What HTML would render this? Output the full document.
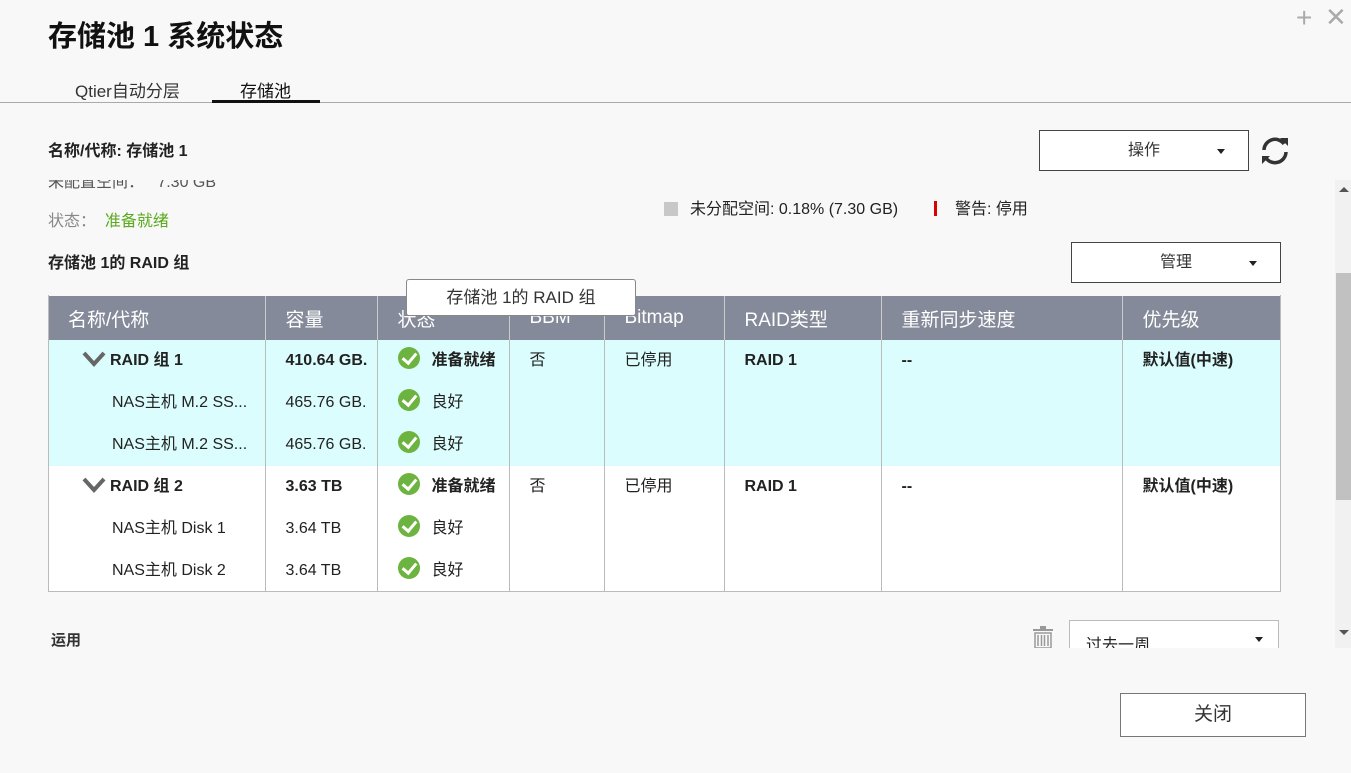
<!DOCTYPE html>
<html><head><meta charset="utf-8"><style>
*{margin:0;padding:0;box-sizing:border-box}
body{width:1351px;height:773px;background:#f8f8f8;font-family:"Liberation Sans","Noto Sans CJK SC",sans-serif;color:#222;position:relative;overflow:hidden}
.a{position:absolute;white-space:nowrap}
.btn{position:absolute;background:#fff;border:1px solid #444;font-size:16px;color:#333}
.tri{position:absolute;width:0;height:0;border-left:4px solid transparent;border-right:4px solid transparent;border-top:5px solid #222}
table{border-collapse:collapse;position:absolute;left:48px;top:296px;width:1233px;font-size:16px}
td,th{border-left:1px solid #bbb;vertical-align:top;text-align:left;font-weight:normal}
th{background:#848a99;color:#fff;font-size:19px;height:44px;padding-left:20px;vertical-align:middle;border-left:1px solid #ccc}
td{padding-left:20px}
.g1 td{background:#dcfdfd}
.g2 td{background:#fff}
.ln{height:42px;line-height:42px}
.ck{display:inline-block;width:22px;height:22px;border-radius:50%;background:#6db33f;vertical-align:middle;margin:-6px 12px 0 0;position:relative}
.ck:after{content:"";position:absolute;left:7px;top:3px;width:6px;height:11px;border:solid #fff;border-width:0 3px 3px 0;transform:rotate(40deg)}
.chev{display:inline-block;width:32px;vertical-align:middle;margin-top:-4px}
b{font-weight:bold}
</style></head><body>
<div class="a" style="left:48px;top:13px;font-size:29px;font-weight:bold;color:#111">存储池 1 系统状态</div>
<div class="a" style="left:1296px;top:2px;font-size:28px;color:#aaa">+</div>
<div class="a" style="left:1325px;top:2px;font-size:26px;color:#aaa">✕</div>
<div class="a" style="left:75px;top:77px;font-size:17px;color:#333">Qtier自动分层</div>
<div class="a" style="left:240px;top:77px;font-size:17px;color:#111">存储池</div>
<div class="a" style="left:0;top:102px;width:1351px;height:1px;background:#aaa"></div>
<div class="a" style="left:212px;top:100px;width:108px;height:3px;background:#111"></div>
<div class="a" style="left:48px;top:137px;font-size:16px;font-weight:bold;color:#222">名称/代称: 存储池 1</div>
<div class="btn" style="left:1039px;top:130px;width:210px;height:41px;line-height:39px;text-align:center">操作</div>
<div class="tri" style="left:1217px;top:149px"></div>
<svg class="a" style="left:1259px;top:134px" width="32" height="34" viewBox="0 0 32 34"><path d="M5 16 A11 11 0 0 1 25 10" fill="none" stroke="#333" stroke-width="3.5"/><path d="M27 18 A11 11 0 0 1 7 24" fill="none" stroke="#333" stroke-width="3.5"/><path d="M21 4 L29 4 L29 12 Z" fill="#333"/><path d="M3 30 L3 22 L11 22 Z" fill="#333"/></svg>
<div class="a" style="left:0;top:180px;width:1335px;height:468px;overflow:hidden">
<div class="a" style="left:48px;top:-12px;font-size:16px;color:#555">未配置空间：&nbsp;&nbsp;&nbsp;7.30 GB</div>
<div class="a" style="left:48px;top:27px;font-size:16px;color:#888">状态：&nbsp;&nbsp;<span style="color:#5aaa1e">准备就绪</span></div>
<div class="a" style="left:664px;top:22px;width:14px;height:14px;background:#c8c8c8"></div>
<div class="a" style="left:690px;top:15px;font-size:16px;color:#222">未分配空间: 0.18% (7.30 GB)</div>
<div class="a" style="left:934px;top:21px;width:3px;height:15px;background:#d00"></div>
<div class="a" style="left:955px;top:15px;font-size:16px;color:#222">警告: 停用</div>
<div class="a" style="left:48px;top:69px;font-size:16px;font-weight:bold;color:#222">存储池 1的 RAID 组</div>
<div class="btn" style="left:1071px;top:62px;width:210px;height:41px;line-height:39px;text-align:center">管理</div>
<div class="tri" style="left:1249px;top:81px"></div>
<div class="a" style="left:0;top:-180px">
<table>
<tr><th style="width:217px;border-left:none">名称/代称</th><th style="width:112px">容量</th><th style="width:132px">状态</th><th style="width:95px">BBM</th><th style="width:120px">Bitmap</th><th style="width:157px">RAID类型</th><th style="width:241px">重新同步速度</th><th>优先级</th></tr>
<tr class="g1"><td style="border-left:none;padding-left:30px"><div class="ln"><svg class="chev" width="24" height="16" viewBox="0 0 24 16"><path d="M2 2 L12 13 L22 2" fill="none" stroke="#666" stroke-width="4"/></svg><b>RAID 组 1</b></div><div class="ln" style="padding-left:34px">NAS主机 M.2 SS...</div><div class="ln" style="padding-left:34px">NAS主机 M.2 SS...</div></td>
<td><div class="ln"><b>410.64 GB.</b></div><div class="ln">465.76 GB.</div><div class="ln">465.76 GB.</div></td>
<td><div class="ln"><span class="ck"></span><b>准备就绪</b></div><div class="ln"><span class="ck"></span>良好</div><div class="ln"><span class="ck"></span>良好</div></td>
<td><div class="ln">否</div></td><td><div class="ln">已停用</div></td><td><div class="ln"><b>RAID 1</b></div></td><td><div class="ln"><b>--</b></div></td><td><div class="ln"><b>默认值(中速)</b></div></td></tr>
<tr class="g2"><td style="border-left:none;padding-left:30px"><div class="ln"><svg class="chev" width="24" height="16" viewBox="0 0 24 16"><path d="M2 2 L12 13 L22 2" fill="none" stroke="#666" stroke-width="4"/></svg><b>RAID 组 2</b></div><div class="ln" style="padding-left:34px">NAS主机 Disk 1</div><div class="ln" style="padding-left:34px">NAS主机 Disk 2</div></td>
<td><div class="ln"><b>3.63 TB</b></div><div class="ln">3.64 TB</div><div class="ln">3.64 TB</div></td>
<td><div class="ln"><span class="ck"></span><b>准备就绪</b></div><div class="ln"><span class="ck"></span>良好</div><div class="ln"><span class="ck"></span>良好</div></td>
<td><div class="ln">否</div></td><td><div class="ln">已停用</div></td><td><div class="ln"><b>RAID 1</b></div></td><td><div class="ln"><b>--</b></div></td><td><div class="ln"><b>默认值(中速)</b></div></td></tr>
</table>
<div class="a" style="left:48px;top:591px;width:1233px;height:1px;background:#bbb"></div>
<div class="a" style="left:48px;top:295px;width:1233px;height:297px;border:1px solid #bbb;border-top:none"></div>
<div class="a" style="left:406px;top:279px;width:230px;height:37px;background:#fff;border:1px solid #888;border-radius:3px;font-size:17px;color:#333;text-align:center;line-height:36px">存储池 1的 RAID 组</div>
<div class="a" style="left:51px;top:629px;font-size:15px;font-weight:bold;color:#333">运用</div>
<svg class="a" style="left:1032px;top:626px" width="22" height="24" viewBox="0 0 22 24"><rect x="1" y="3" width="20" height="2" fill="#999"/><rect x="8" y="0" width="6" height="3" fill="#999"/><path d="M3 7 H19 V22 H3 Z M6 9 V20 M9.5 9 V20 M12.5 9 V20 M16 9 V20" fill="none" stroke="#999" stroke-width="1.5"/></svg>
<div class="a" style="left:1069px;top:620px;width:210px;height:42px;background:#fff;border:1px solid #bbb;font-size:16px;padding:10px 0 0 16px">过去一周</div>
<div class="tri" style="left:1255px;top:637px"></div>
</div></div>
<div class="a" style="left:1335px;top:180px;width:16px;height:468px;background:#f1f1f1"></div>
<div class="a" style="left:1336px;top:273px;width:15px;height:227px;background:#c1c1c1"></div>
<div class="a" style="left:1339px;top:187px;border-left:5px solid transparent;border-right:5px solid transparent;border-bottom:5px solid #555"></div>
<div class="a" style="left:1339px;top:630px;border-left:5px solid transparent;border-right:5px solid transparent;border-top:5px solid #555"></div>
<div class="btn" style="left:1120px;top:693px;width:186px;height:44px;line-height:42px;text-align:center;font-size:19px;border-color:#777">关闭</div>
</body></html>
